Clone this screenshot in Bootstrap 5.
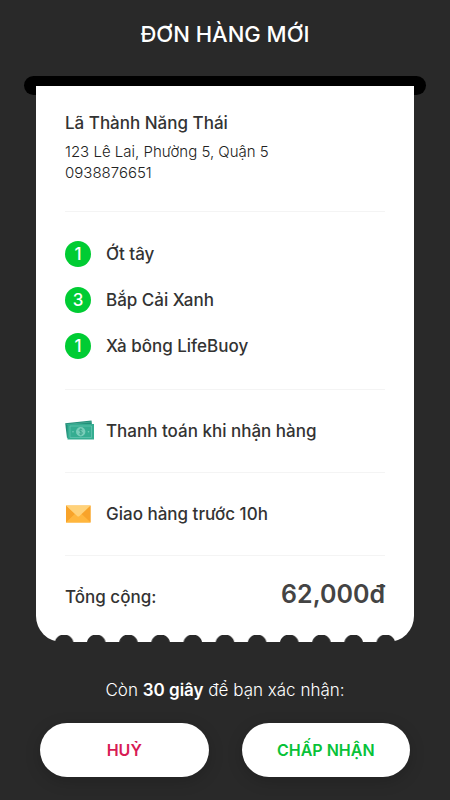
<!DOCTYPE html>
<html lang="vi">
<head>
<meta charset="utf-8">
<meta name="viewport" content="width=device-width, initial-scale=1">
<title>Đơn hàng mới</title>
<link href="https://cdn.jsdelivr.net/npm/bootstrap@5.3.0/dist/css/bootstrap.min.css" rel="stylesheet">
<style>
  body { background: #292929; color: #333; font-family: Inter, "Noto Sans", sans-serif; font-size: 17px; line-height: 24px; }
  .screen { padding: 18px 24px 23px; }
  .screen-title { font-size: 22px; line-height: 32px; margin-bottom: 26px; font-weight: 500; }
  .slot { background: #000; height: 19px; border-radius: 10px; }
  .receipt { background: #fff; margin: -9px 12px 0; padding: 25px 29px 0; border-radius: 0 0 26px 26px; }
  .block { border-bottom: 1px solid #f4f4f4; }
  .customer { padding-bottom: 28px; }
  .customer-name { font-size: 17px; line-height: 24px; margin-bottom: 6px; font-weight: 500; }
  .address { font-size: 15px; line-height: 21px; font-weight: 300; color: #222; }
  .goods { padding: 29px 0 30px; gap: 20px; }
  .line-item { gap: 15px; font-weight: 500; }
  .qty { width: 26px; height: 26px; background: #00cc33; }
  .info { height: 83px; }
  .pictogram { width: 30px; height: 24px; margin-right: -4px; }
  .sum { height: 79px; padding-top: 22px; }
  .amount { font-size: 25px; line-height: 32px; font-weight: 600; color: #444; }
  .perforation { height: 7px; margin: 0 -17px; background: radial-gradient(circle at 50% 9px, #292929 9px, transparent 10px) 0 0 / calc(100% / 11) 100%; }
  .countdown { margin: 36px 0 21px; color: #fff; font-weight: 300; }
  .countdown strong { font-weight: 600; }
  .actions { padding: 0 16px; gap: 33px; }
  .btn.action { --bs-btn-bg: #fff; --bs-btn-hover-bg: #f2f2f2; --bs-btn-active-bg: #e6e6e6; height: 54px; font-size: 16px; font-weight: 600; box-shadow: 0 4px 16px rgba(0,0,0,.18); }
  .btn.decline { --bs-btn-color: #d81b54; --bs-btn-hover-color: #d81b54; --bs-btn-active-color: #d81b54; }
  .btn.accept { --bs-btn-color: #08c238; --bs-btn-hover-color: #08c238; --bs-btn-active-color: #08c238; }
</style>
</head>
<body>
<main class="screen">
  <h1 class="screen-title text-center text-white">ĐƠN HÀNG MỚI</h1>
  <div class="slot"></div>
  <section class="receipt position-relative">
    <div class="block customer">
      <h2 class="customer-name">Lã Thành Năng Thái</h2>
      <address class="address mb-0">123 Lê Lai, Phường 5, Quận 5<br>0938876651</address>
    </div>
    <ul class="block goods list-unstyled d-flex flex-column mb-0">
      <li class="line-item d-flex align-items-center"><span class="qty rounded-circle text-white d-flex align-items-center justify-content-center">1</span>Ớt tây</li>
      <li class="line-item d-flex align-items-center"><span class="qty rounded-circle text-white d-flex align-items-center justify-content-center">3</span>Bắp Cải Xanh</li>
      <li class="line-item d-flex align-items-center"><span class="qty rounded-circle text-white d-flex align-items-center justify-content-center">1</span>Xà bông LifeBuoy</li>
    </ul>
    <div class="block info line-item d-flex align-items-center">
      <svg class="pictogram flex-shrink-0" viewBox="0 0 30 24" aria-hidden="true">
        <path d="M.2 4.200 26.500 1.500l.9 8L2 19z" fill="#218e78"/>
        <path d="M1.500 5.500 26 3" stroke="#55b29c" stroke-width=".7"/>
        <path d="M2.500 5h26.500v15.500H2.500z" fill="#35ad91"/>
        <path d="M5 7h21.500v11.500H5z" fill="none" stroke="#63c4ae" stroke-width=".8"/>
        <circle cx="15.700" cy="12.800" r="4.700" fill="#79cdb9"/>
        <path d="M17.400 11c-.6-.9-3.200-.9-3.200.5s3.300 1 3.300 2.500-2.800 1.600-3.500.5M15.800 9.300v7" fill="none" stroke="#349f86" stroke-width=".8"/>
        <circle cx="8" cy="12.800" r=".8" fill="#79cdb9"/><circle cx="23.500" cy="12.800" r=".8" fill="#79cdb9"/>
      </svg>Thanh toán khi nhận hàng
    </div>
    <div class="block info line-item d-flex align-items-center">
      <svg class="pictogram flex-shrink-0" viewBox="0 0 30 24" aria-hidden="true">
        <path d="M1 3.500h24.500v17H1z" fill="#ffb338"/>
        <path d="M1 3.500 10 12 1 20.500zM25.500 3.500 16.500 12l9 8.500z" fill="#f8a32a"/>
        <path d="M1 20.500 10 12h6.500l9 8.500z" fill="#ffb63d"/>
        <path d="M1 3.500h24.500L14.500 14q-1.200 1-2.400 0z" fill="#ffd27a"/>
      </svg>Giao hàng trước 10h
    </div>
    <div class="sum d-flex align-items-baseline justify-content-between">
      <span class="line-item">Tổng cộng:</span><span class="amount">62,000đ</span>
    </div>
    <div class="perforation"></div>
  </section>
  <p class="countdown text-center">Còn <strong>30 giây</strong> để bạn xác nhận:</p>
  <div class="actions d-flex">
    <button type="button" class="btn action decline rounded-pill flex-fill w-50 border-0">HUỶ</button>
    <button type="button" class="btn action accept rounded-pill flex-fill w-50 border-0">CHẤP NHẬN</button>
  </div>
</main>
<script src="https://cdn.jsdelivr.net/npm/bootstrap@5.3.0/dist/js/bootstrap.bundle.min.js"></script>
</body>
</html>
